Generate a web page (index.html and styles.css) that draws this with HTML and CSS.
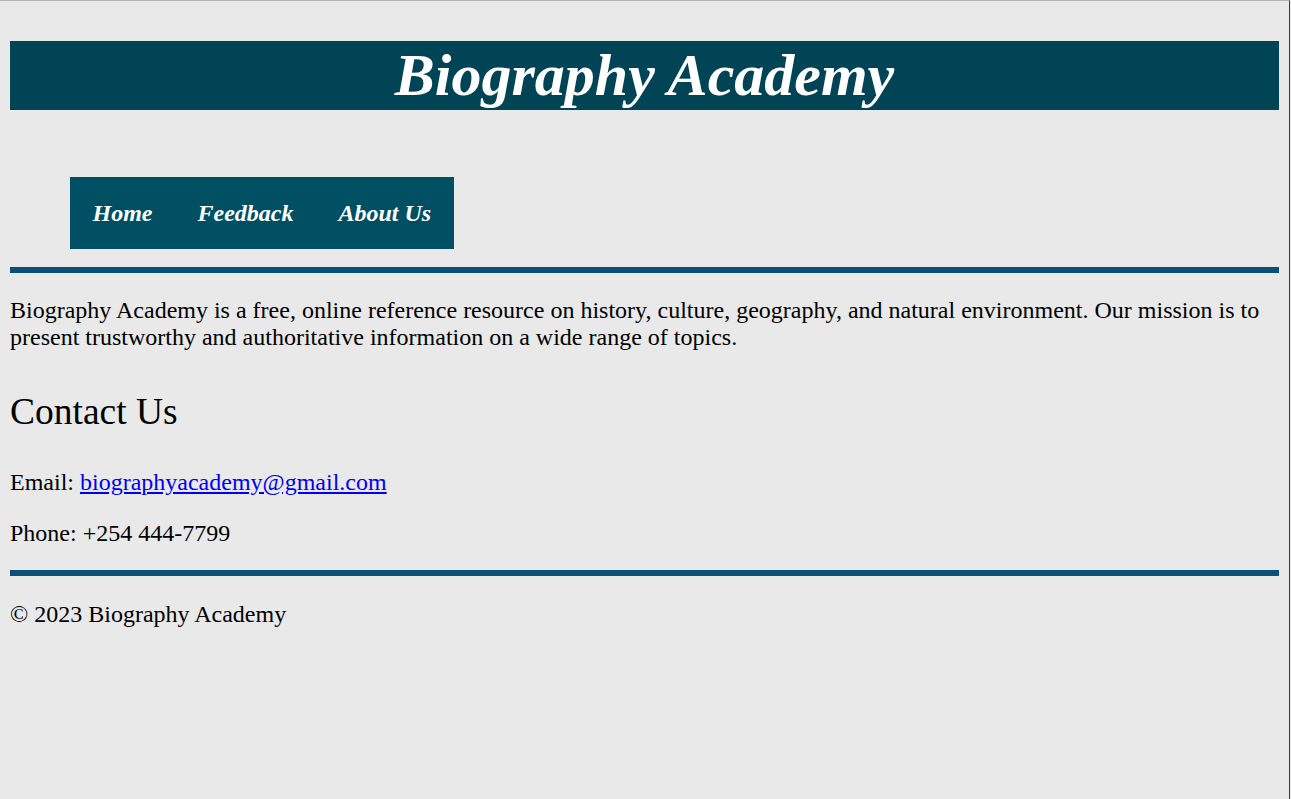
FILE: index.html
```html
<!DOCTYPE html>
<html lang="en">
<head>
<meta charset="utf-8">
<title>Biography Academy</title>
<link rel="stylesheet" href="styles.css">
</head>
<body>
<div class="frame">
  <header class="site-header">
    <h1 class="site-title">Biography Academy</h1>
  </header>
  <nav class="main-nav">
    <ul class="nav-list">
      <li class="nav-item"><a class="nav-link" href="#">Home</a></li>
      <li class="nav-item"><a class="nav-link" href="#">Feedback</a></li>
      <li class="nav-item"><a class="nav-link" href="#">About Us</a></li>
    </ul>
  </nav>
  <hr class="rule">
  <main class="content">
    <p class="intro">Biography Academy is a free, online reference resource on history, culture, geography, and natural environment. Our mission is to present trustworthy and authoritative information on a wide range of topics.</p>
    <h2 class="section-title">Contact Us</h2>
    <p class="contact-line email-line">Email: <a class="mail-link" href="#">biographyacademy@gmail.com</a></p>
    <p class="contact-line phone-line">Phone: +254 444-7799</p>
  </main>
  <hr class="rule">
  <footer class="site-footer">
    <p class="copyright">&copy; 2023 Biography Academy</p>
  </footer>
</div>
</body>
</html>
```
FILE: styles.css
```css
html {
  background: #e9e9e9;
}

body {
  margin: 0;
  font-family: "Liberation Serif", "Times New Roman", serif;
  font-size: 24px;
  line-height: 27px;
  color: #000;
}

.frame {
  box-sizing: border-box;
  width: 1290px;
  min-height: 799px;
  padding: 0 10px;
  border-top: 1px solid #b4b4b4;
  border-right: 1px solid #3c3c3c;
  background: #e9e9e9;
  display: flow-root;
}

.site-header {
  margin-top: 40px;
  background: #004455;
}

.site-title {
  margin: 0;
  font-size: 60px;
  line-height: 69px;
  font-weight: bold;
  font-style: italic;
  text-align: center;
  color: #fff;
}

.main-nav {
  display: flex;
  margin: 67px 0 0 60px;
}

.nav-list {
  display: flex;
  margin: 0;
  padding: 22px 0;
  list-style: none;
  background: #004f63;
}

.nav-item {
  padding: 0 22.5px;
  line-height: 28px;
}

.nav-link {
  color: #fff;
  text-decoration: none;
  font-weight: bold;
  font-style: italic;
}

.rule {
  height: 6px;
  margin: 18px 0 0;
  border: 0;
  background: #0a5078;
}

.content {
  display: flow-root;
}

.intro {
  margin: 24px 0 0;
}

.section-title {
  margin: 41px 0 0;
  font-size: 37.5px;
  line-height: 40px;
  font-weight: normal;
}

.email-line {
  margin: 37px 0 0;
}

.phone-line {
  margin: 24px 0 23px;
}

.mail-link {
  color: #0000ee;
}

.content + .rule {
  margin-top: 0;
}

.copyright {
  margin: 25px 0 0;
}
```
